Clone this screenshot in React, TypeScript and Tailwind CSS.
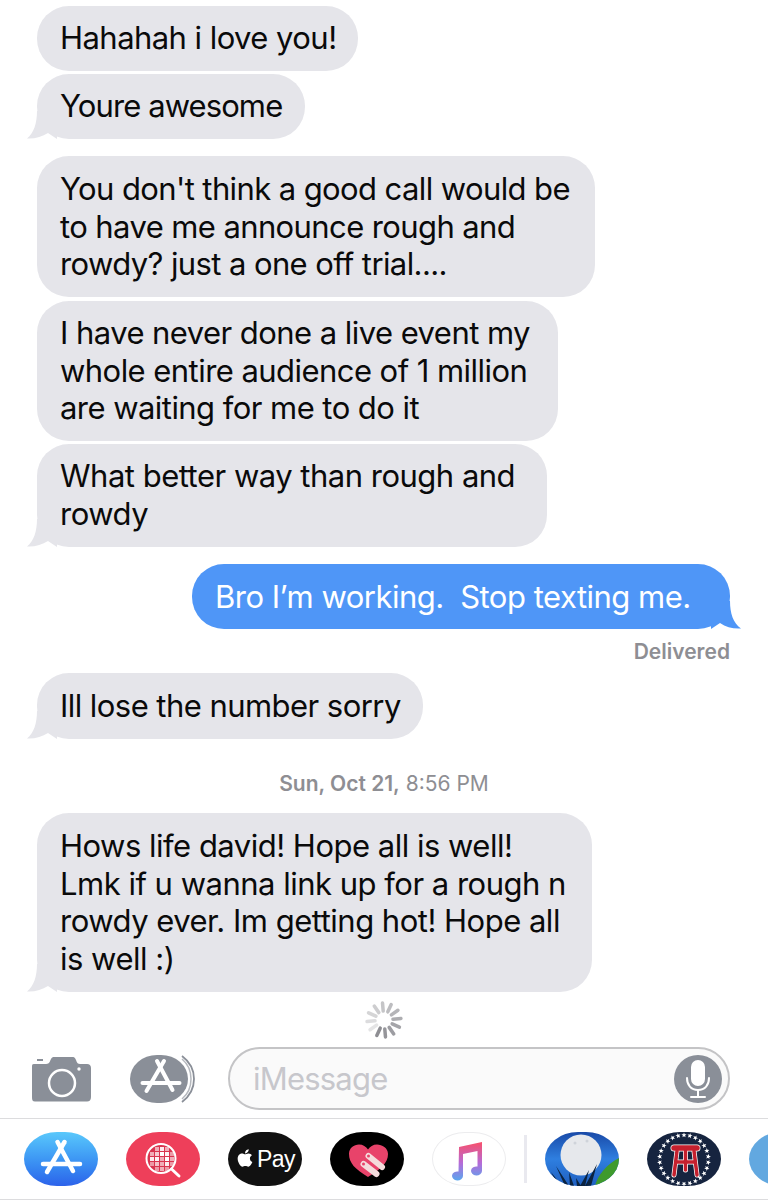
import { FaApple } from 'react-icons/fa';

const font = { fontFamily: 'Inter, "Liberation Sans", sans-serif' };

function TailLeft() {
  return (
    <svg className="absolute left-[-10px] bottom-0" width="30" height="28" viewBox="0 0 30 28">
      <path d="M10 0 C10 12 7 22 0 27.5 C8 28 15 25.5 21 22 L30 28 L30 0 Z" fill="#e5e5ea" />
    </svg>
  );
}

function TailRight() {
  return (
    <svg className="absolute right-[-11px] bottom-0" width="30" height="28" viewBox="0 0 30 28">
      <path d="M19 0 C19 12 22 22 30 27.5 C22 28 15 26 9 22 C6 24 3 26 0 28 L0 0 Z" fill="#4f96f7" />
    </svg>
  );
}

function Bubble({ lines, className, tail }: { lines: string[]; className: string; tail?: boolean }) {
  return (
    <div className={`relative ml-[37px] rounded-[32px] bg-[#e5e5ea] pl-[23px] pr-[20px] text-[31px] leading-[37.6px] text-[#0a0a0a] whitespace-nowrap ${className}`}>
      {tail && <TailLeft />}
      {lines.map((line) => (
        <div key={line} className="relative">{line}</div>
      ))}
    </div>
  );
}

function StoreGlyph({ width = 4.5 }: { width?: number }) {
  return (
    <g stroke="#fff" strokeWidth={width} strokeLinecap="round" fill="none">
      <path d="M33.500 10 L49 39" />
      <path d="M40.500 10 L23 40" />
      <path d="M19 32 H56" />
    </g>
  );
}

function Spinner() {
  const ticks = Array.from({ length: 12 }, (_, i) => i);
  return (
    <svg width="40" height="40" viewBox="-20 -20 40 40">
      {ticks.map((i) => (
        <line
          key={i}
          x1="0"
          y1="-9"
          x2="0"
          y2="-17"
          stroke="#8e8e93"
          strokeWidth="3.500"
          strokeLinecap="round"
          transform={`rotate(${205 - i * 30})`}
          opacity={1 - i * 0.07}
        />
      ))}
    </svg>
  );
}

function Camera() {
  return (
    <svg width="60" height="46" viewBox="0 0 60 46">
      <path d="M3 8 H15 C17 8 18.500 7 19.500 4 C20.500 1.500 21.500 1 24 1 H41 C43 1 44 1.500 45 4 C46 7 47 8 49 8 H56 C58.500 8 60 9.500 60 12 V41 C60 44 58.500 45.500 56 45.500 H4 C1.500 45.500 1 44 1 41 V11 C1 9 1 8 3 8 Z" fill="#8a8f98" />
      <rect x="6" y="3" width="6" height="2" fill="#8a8f98" />
      <circle cx="31" cy="27" r="13" fill="none" stroke="#fff" strokeWidth="2.500" />
      <circle cx="48" cy="13" r="1.700" fill="#fff" />
    </svg>
  );
}

function AppsButton() {
  return (
    <svg width="66" height="50" viewBox="0 0 66 50">
      <path d="M52 2 C60 8 64 17 64 25 C64 33 60 42 52 48" fill="none" stroke="#8a8f98" strokeWidth="1.800" />
      <path d="M52 5 C58 10 61 17 61 25 C61 33 58 40 52 45" fill="none" stroke="#b5b8be" strokeWidth="1.500" />
      <rect x="0" y="1" width="58" height="48" rx="27" ry="24" fill="#8a8f98" />
      <g transform="translate(-6.500 -3)">
        <StoreGlyph width={4} />
      </g>
    </svg>
  );
}

function Mic() {
  return (
    <div className="flex h-[48px] w-[48px] items-center justify-center rounded-full bg-[#8a8f98]">
      <svg width="26" height="38" viewBox="0 0 26 38" fill="none" stroke="#fff" strokeWidth="2" strokeLinecap="round">
        <rect x="7" y="1" width="12" height="24" rx="6" fill="#fff" />
        <path d="M2 18 C2 25 6 30 13 30 C20 30 24 25 24 18" />
        <path d="M13 30 V36 M6 37 H20" />
      </svg>
    </div>
  );
}

function Pill({ className, children }: { className: string; children?: React.ReactNode }) {
  return (
    <div className={`h-[54px] w-[74px] flex-none overflow-hidden rounded-[33px/27px] ${className}`}>
      <svg width="74" height="54" viewBox="0 0 74 54">{children}</svg>
    </div>
  );
}

// cells of the map under the magnifier, pale ones are the lit squares
const mapCells = [
  [29, 15, 0.6], [34, 15, 0.9], [39, 15, 0.6],
  [24, 20, 0.6], [29, 20, 0.75], [34, 20, 1], [39, 20, 0.95], [44, 20, 0.5],
  [24, 25, 0.9], [29, 25, 0.95], [34, 25, 0.6], [39, 25, 1], [44, 25, 0.6],
  [24, 30, 0.5], [29, 30, 0.7], [34, 30, 0.6], [39, 30, 0.9], [44, 30, 0.5],
  [29, 35, 0.5], [34, 35, 0.6], [39, 35, 0.5],
];

function Stars() {
  const stars = Array.from({ length: 26 }, (_, i) => (i * 360) / 26);
  return (
    <>
      {stars.map((a) => (
        <path
          key={a}
          d="M0 -2.600 L0.700 -0.800 L2.600 -0.800 L1.100 0.400 L1.600 2.300 L0 1.200 L-1.600 2.300 L-1.100 0.400 L-2.600 -0.800 L-0.700 -0.800 Z"
          fill="#fff"
          transform={`translate(37 27.500) rotate(${a}) translate(0 -24.500)`}
        />
      ))}
    </>
  );
}

const stoolPath = 'M30 19 L27 43 M47 19 L50 43 M38.500 19 V38 M29 30 H48';

export default function App() {
  return (
    <div className="flex h-[1200px] w-[768px] flex-col overflow-hidden bg-white pt-[6px]" style={font}>
      <Bubble className="h-[65px] w-[321px] pt-[13px] tracking-[-0.55px]" lines={['Hahahah i love you!']} />
      <Bubble className="mt-[3px] h-[65px] w-[268px] pt-[13px] tracking-[-0.9px]" tail lines={['Youre awesome']} />
      <Bubble
        className="mt-[17px] h-[141px] w-[558px] pt-[14px] tracking-[-0.6px]"
        lines={["You don't think a good call would be", 'to have me announce rough and', 'rowdy? just a one off trial....']}
      />
      <Bubble
        className="mt-[4px] h-[140px] w-[521px] pt-[13px] tracking-[-0.55px]"
        lines={['I have never done a live event my', 'whole entire audience of 1 million', 'are waiting for me to do it']}
      />
      <Bubble className="mt-[3px] h-[103px] w-[510px] pt-[13px] tracking-[-0.5px]" tail lines={['What better way than rough and', 'rowdy']} />

      <div className="relative ml-[192px] mt-[17px] h-[65px] w-[538px] rounded-[32px] bg-[#4f96f7] pl-[23px] pr-[20px] pt-[14px] text-[31px] leading-[38px] tracking-[-0.5px] text-white whitespace-pre">
        <TailRight />
        <div className="relative">Bro I’m working.  Stop texting me.</div>
      </div>
      <div className="mr-[38px] mt-[10px] text-right text-[21px] leading-[25px] font-semibold text-[#8e8e93]">Delivered</div>

      <Bubble className="mt-[9px] h-[66px] w-[386px] pt-[14px] tracking-[-0.55px]" tail lines={['Ill lose the number sorry']} />

      <div className="mt-[32px] text-center text-[21px] leading-[25px] text-[#8e8e93]">
        <span className="font-semibold">Sun, Oct 21,</span> 8:56 PM
      </div>

      <Bubble
        className="mt-[17px] h-[179px] w-[555px] pt-[14px] tracking-[-0.5px]"
        tail
        lines={['Hows life david! Hope all is well!', 'Lmk if u wanna link up for a rough n', 'rowdy ever. Im getting hot! Hope all', 'is well :)']}
      />

      <div className="mt-[8px] flex justify-center">
        <Spinner />
      </div>

      <div className="mt-[7px] flex h-[63px] items-center pl-[31px]">
        <Camera />
        <div className="ml-[39px] w-[58px]">
          <AppsButton />
        </div>
        <div className="ml-[40px] flex h-[63px] w-[502px] items-center justify-between rounded-[32px] border-2 border-[#c4c4c6] bg-[#fafafa] pl-[23px] pr-[6px]">
          <span className="pt-[2px] text-[31px] tracking-[-0.8px] text-[#c7c7cc]">iMessage</span>
          <Mic />
        </div>
      </div>

      <div className="mt-[8px] flex h-[82px] items-center gap-[28px] border-y border-[#dcdcde] pl-[24px]">
        <Pill className="bg-gradient-to-b from-[#5ac8fb] to-[#2d62ea]">
          <StoreGlyph />
        </Pill>
        <Pill className="bg-[#ee3f5a]">
          <circle cx="35" cy="26.500" r="14.500" fill="#d9344f" stroke="#fff" strokeWidth="2" />
          {mapCells.map(([x, y, o]) => (
            <rect key={`${x}-${y}`} x={x} y={y} width="4" height="4" fill="#fff" opacity={o} />
          ))}
          <path d="M45.500 37 L53 44" stroke="#fff" strokeWidth="3" strokeLinecap="round" />
        </Pill>
        <div className="flex h-[54px] w-[74px] flex-none items-center justify-center rounded-[33px/27px] bg-[#111] text-white">
          <FaApple size={20} className="mb-[2px]" />
          <span className="ml-[2px] text-[23px] leading-none tracking-[-0.5px]" style={{ fontFamily: '"Liberation Sans", sans-serif' }}>Pay</span>
        </div>
        <Pill className="bg-black">
          <path d="M38 45 C25 37 19 31 19 22 C19 16 24 12.500 29 12.500 C33 12.500 36 14.500 38 17.500 C40 14.500 43 12.500 47 12.500 C52 12.500 58 16 58 22 C58 31 51 37 38 45 Z" fill="#e8436a" />
          <path d="M38.500 24 L52 35" stroke="#f4dcdc" strokeWidth="6" strokeLinecap="round" />
          <path d="M33.500 32 L46.500 42" stroke="#f4dcdc" strokeWidth="6" strokeLinecap="round" />
          <circle cx="38.500" cy="24" r="1.500" fill="#e8436a" />
          <circle cx="33.500" cy="32" r="1.500" fill="#e8436a" />
        </Pill>
        <Pill className="border border-[#ececee] bg-white">
          <defs>
            <linearGradient id="note" x1="0" y1="0" x2="0" y2="1">
              <stop offset="0" stopColor="#f9506a" />
              <stop offset="0.55" stopColor="#b56bd8" />
              <stop offset="1" stopColor="#5aa6ee" />
            </linearGradient>
          </defs>
          <path d="M26 14 L49 9 V38 A5.500 4.500 0 1 1 44.500 33.500 V18 L30 21 V43 A5.500 4.500 0 1 1 25.500 38.500 Z" fill="url(#note)" />
        </Pill>
        <div className="-mx-[10px] h-[48px] w-[3px] flex-none bg-[#e9e9ef]" />
        <Pill className="bg-gradient-to-b from-[#1a4aa8] via-[#2f7fe0] to-[#1f5fc0]">
          <path d="M50 54 C52 44 62 32 74 26 V54 Z" fill="#3f9a2c" />
          <circle cx="36" cy="23" r="20.500" fill="#e6e8ec" />
          <circle cx="30" cy="11" r="1.500" fill="#cfd3da" />
          <circle cx="42" cy="9" r="1.500" fill="#cfd3da" />
          <path d="M6 40 L13 54 L17 54 Z M11 34 L20 54 L24 54 Z M24 40 L25 54 L29 54 Z M31 46 L32 54 L36 54 Z M52 32 L40 54 L46 54 Z M44 38 L35 54 L40 54 Z" fill="#0b2340" />
        </Pill>
        <Pill className="bg-[#16243f]">
          <Stars />
          <g fill="none" strokeLinecap="round">
            <path d="M27 16 H50" stroke="#fff" strokeWidth="7" />
            <path d={stoolPath} stroke="#fff" strokeWidth="5" />
            <path d="M27 16 H50" stroke="#c5202e" strokeWidth="5.500" />
            <path d={stoolPath} stroke="#c5202e" strokeWidth="3.500" />
          </g>
        </Pill>
        <div className="h-[54px] w-[74px] flex-none rounded-[33px/27px] bg-[#62a8e0]" />
      </div>
    </div>
  );
}
